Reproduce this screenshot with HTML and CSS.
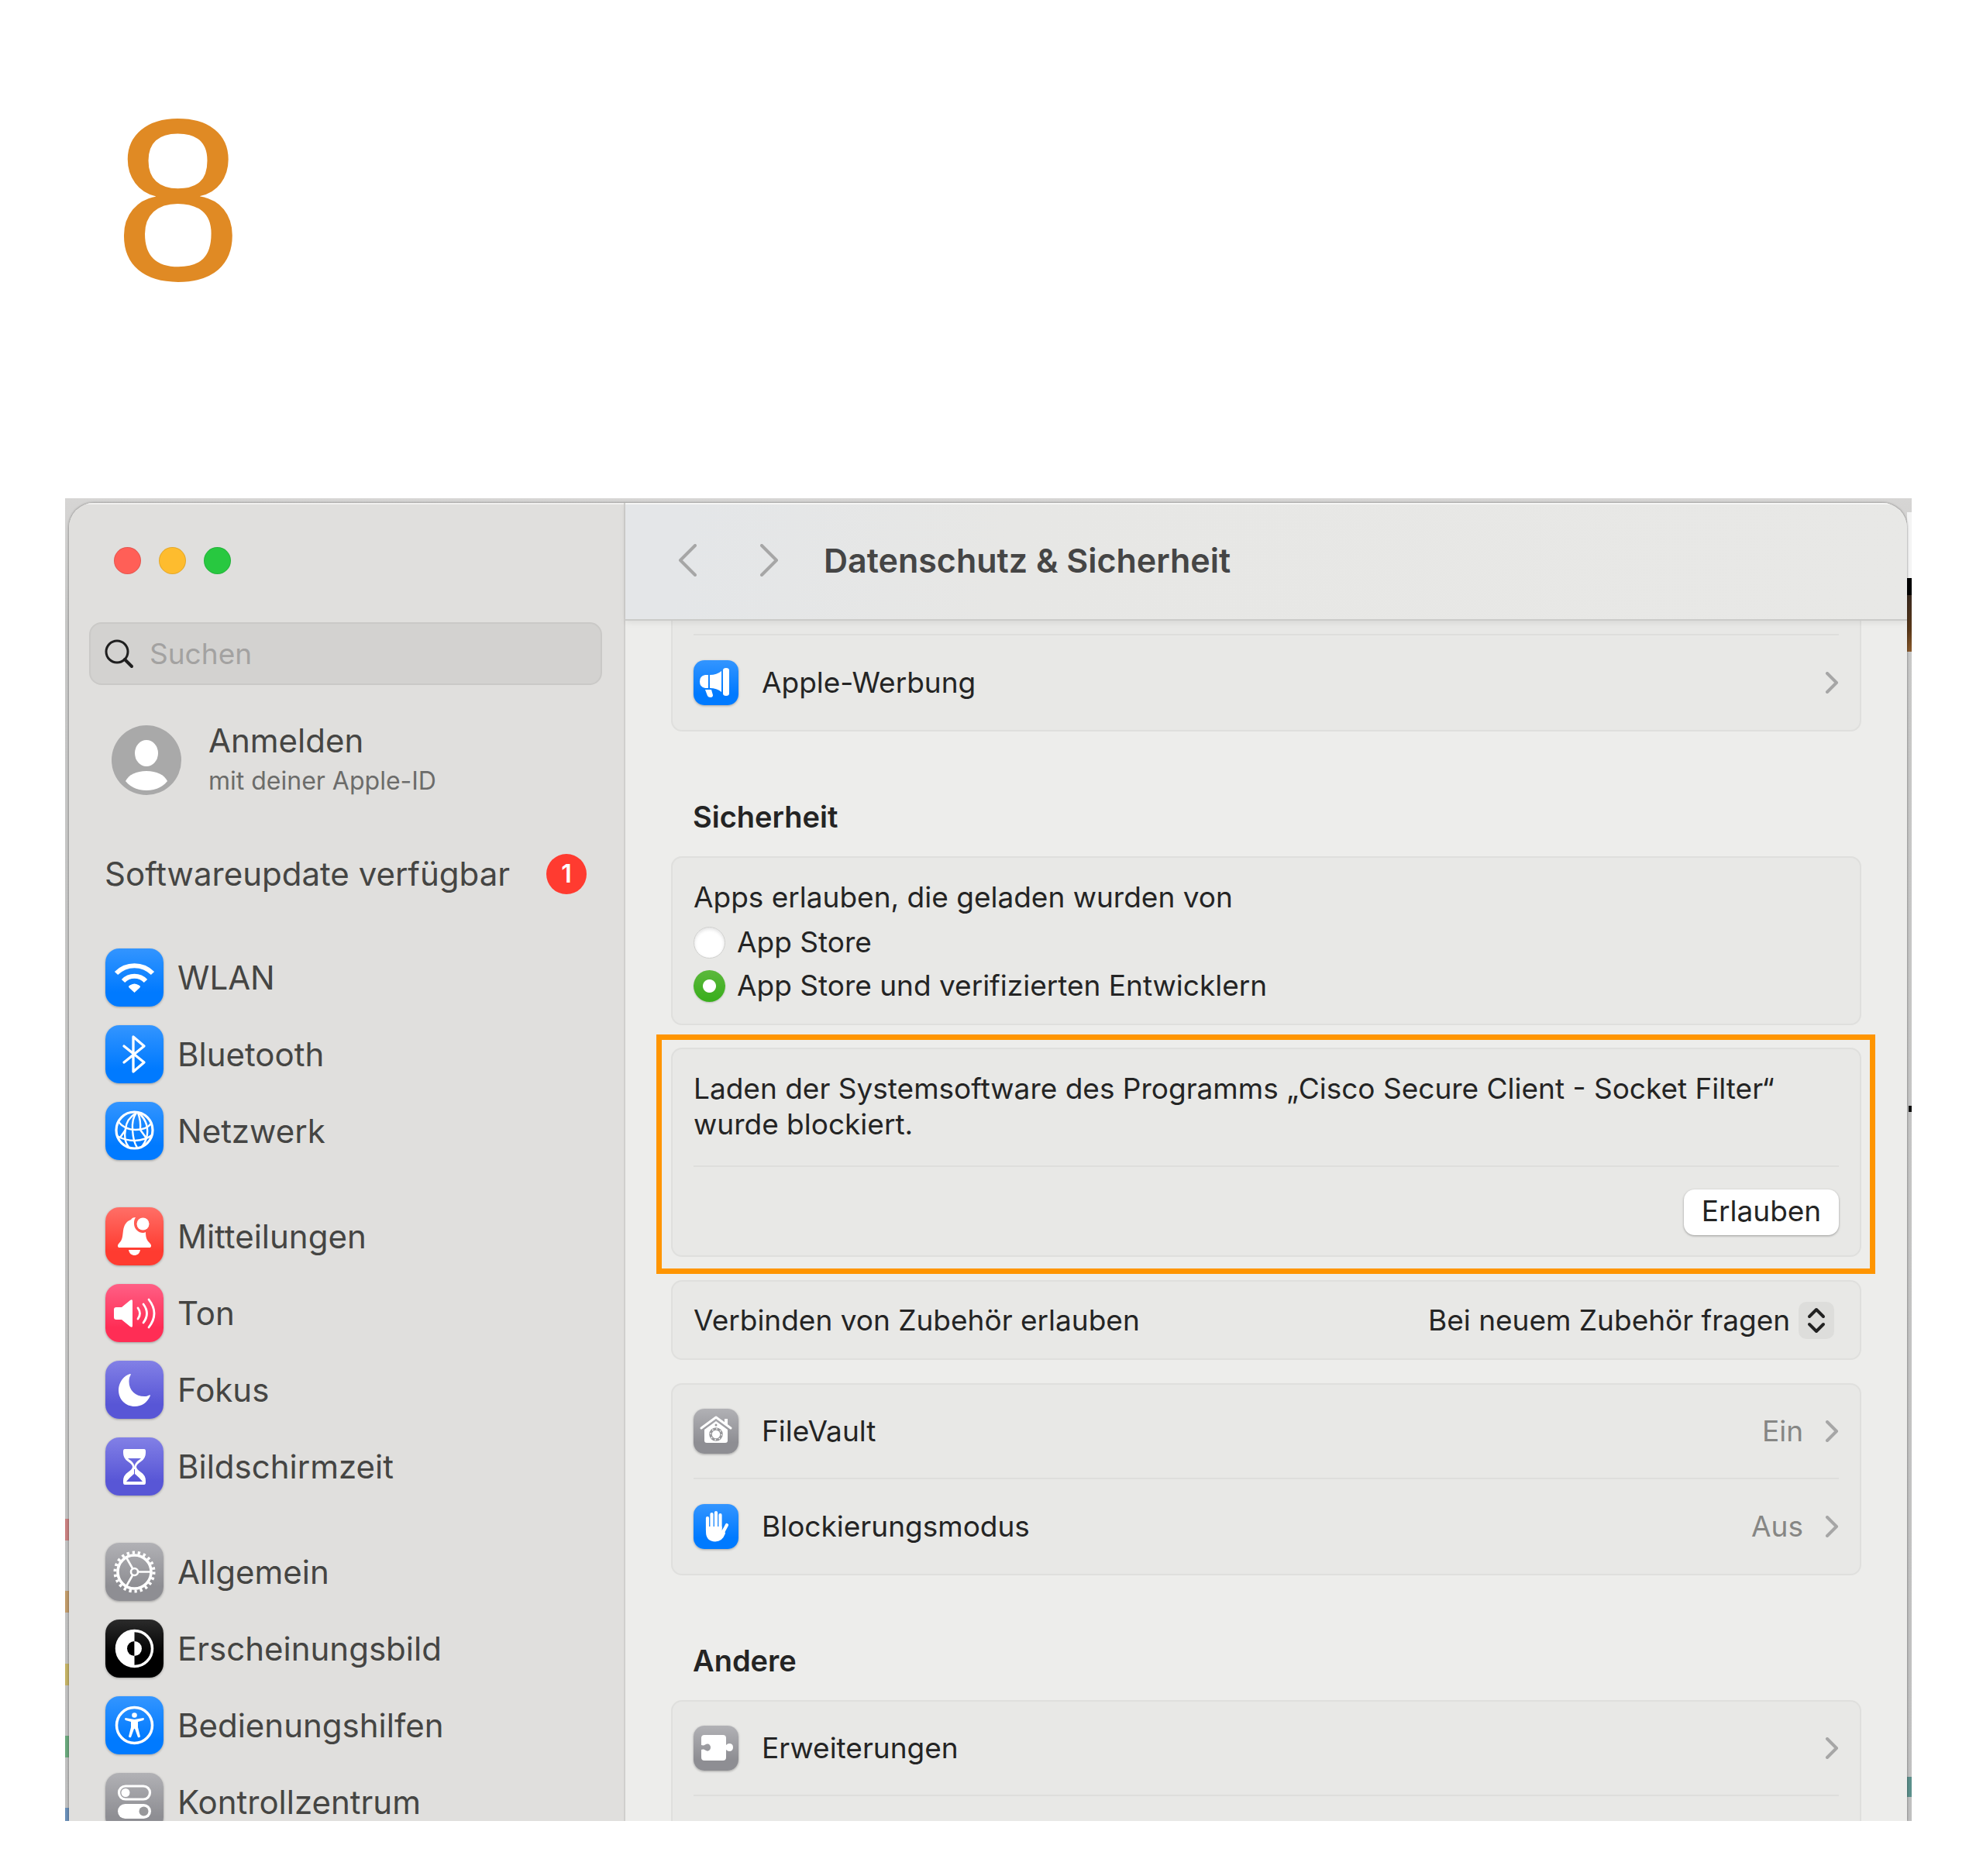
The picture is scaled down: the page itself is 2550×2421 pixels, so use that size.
FILE: index.html
```html
<!DOCTYPE html>
<html lang="de">
<head>
    <meta charset="UTF-8">
    <meta name="viewport" content="width=device-width, initial-scale=1.0">
    <title>Datenschutz &amp; Sicherheit</title>
    <link rel="stylesheet" href="styles.css">
</head>
<body>

<p class="step">8</p>

<main class="desktop">
    <div class="window">

        <aside class="sidebar">
            <div class="lights">
                <button class="light red" aria-label="Schließen"></button>
                <button class="light yellow" aria-label="Minimieren"></button>
                <button class="light green" aria-label="Vergrößern"></button>
            </div>

            <label class="search">
                <svg width="38" height="38" viewBox="0 0 38 38" fill="none" stroke="#1f1f1f" stroke-width="3" stroke-linecap="round">
                    <circle cx="16" cy="16" r="14"/>
                    <path d="M26 26 L35 35" stroke-width="4"/>
                </svg>
                <input type="search" placeholder="Suchen" aria-label="Suchen">
            </label>

            <a class="account" href="#">
                <svg width="90" height="90" viewBox="0 0 90 90">
                    <circle cx="45" cy="45" r="45" fill="#a9a9a9"/>
                    <ellipse cx="45" cy="36" rx="15" ry="17" fill="#fff"/>
                    <path d="M18 72 C22 64 32 59 45 59 C58 59 68 64 72 72 C66 80 56 84 45 84 C34 84 24 80 18 72Z" fill="#fff"/>
                </svg>
                <span class="account-text">
                    <span class="account-name">Anmelden</span>
                    <span class="account-sub">mit deiner Apple-ID</span>
                </span>
            </a>

            <a class="update" href="#">
                <span>Softwareupdate verfügbar</span>
                <span class="badge">1</span>
            </a>

            <nav>
                <ul class="group">
                    <li><a href="#">
                        <svg class="icon blue" viewBox="0 0 75 75" fill="none" stroke="#fff">
                            <path d="M14 32 A33 33 0 0 1 61 32" stroke-width="6"/>
                            <path d="M23 42 A20 20 0 0 1 52 42" stroke-width="6"/>
                            <path d="M37.5 57 L31 51 Q29 49 31 48 Q37.5 43 44 48 Q46 49 44 51Z" fill="#fff" stroke="none"/>
                        </svg>
                        WLAN</a></li>
                    <li><a href="#">
                        <svg class="icon blue" viewBox="0 0 75 75" fill="none" stroke="#fff" stroke-width="3.3" stroke-linejoin="round" stroke-linecap="round">
                            <path d="M24 27 L50 48 L36 60 V15 L50 27 L24 48"/>
                        </svg>
                        Bluetooth</a></li>
                    <li><a href="#">
                        <svg class="icon blue" viewBox="0 0 75 75" fill="none" stroke="#fff" stroke-width="2.4">
                            <circle cx="37.5" cy="36.5" r="23.5" stroke-width="3.2"/>
                            <path d="M17 26 Q25 36 39 36 Q53 36 59 28"/>
                            <path d="M15 44 Q26 50 38 50 Q52 49 60 43"/>
                            <path d="M40 14 Q27 22 26 35 Q23 50 30 58"/>
                            <path d="M40 14 Q34 22 35 36 Q36 52 41 59"/>
                            <path d="M42 14 Q46 24 45 36"/>
                            <path d="M43 14 Q58 28 53 47 Q51 53 47 58"/>
                            <path d="M26 36 L19 46 M45 36 L53 47"/>
                        </svg>
                        Netzwerk</a></li>
                </ul>

                <ul class="group">
                    <li><a href="#">
                        <svg class="icon red" viewBox="0 0 75 75" fill="#fff">
                            <path d="M39 13 C36 17 36 26 41 30 C44 33 49 34 52 32 C52 40 54 43 57 46 C59 48 60 50 58 52 H17 C15 50 16 48 18 46 C22 42 22 38 23 30 C24 23 27 18 33 16 C34 14 36 13 39 13Z"/>
                            <path d="M30 55 H45 C44 60 41 62 37.5 62 C34 62 31 60 30 55Z"/>
                            <circle cx="48.5" cy="21.5" r="8"/>
                        </svg>
                        Mitteilungen</a></li>
                    <li><a href="#">
                        <svg class="icon pink" viewBox="0 0 75 75" fill="#fff">
                            <path d="M14 30 H21 L32 21 Q35 19 35 22 V54 Q35 57 32 55 L21 46 H14 Q11 46 11 43 V33 Q11 30 14 30Z"/>
                            <g fill="none" stroke="#fff" stroke-width="2.8" stroke-linecap="round">
                                <path d="M42 31 Q47 38 42 45"/>
                                <path d="M49 26 Q58 38 49 50"/>
                                <path d="M56 20 Q70 38 56 56"/>
                            </g>
                        </svg>
                        Ton</a></li>
                    <li><a href="#">
                        <svg class="icon purple" viewBox="0 0 75 75" fill="#fff">
                            <path d="M32 17 C34 17 32 19 31 22 C28 36 38 47 52 46 C55 46 58 43 58 45 C54 54 47 59 38 59 C26 59 17 50 17 38 C17 28 24 19 32 17Z"/>
                        </svg>
                        Fokus</a></li>
                    <li><a href="#">
                        <svg class="icon purple" viewBox="0 0 75 75" fill="#fff">
                            <path fill-rule="evenodd" d="M25 15 H50 Q52 15 52 18 V20 Q52 27 46 31 Q40 35 40 38 Q40 41 46 45 Q52 49 52 56 V58 Q52 61 50 61 H25 Q23 61 23 58 V56 Q23 49 29 45 Q35 41 35 38 Q35 35 29 31 Q23 27 23 20 V18 Q23 15 25 15Z M29 27 H46 Q44 29 42 30 Q37.5 34 37.5 38 Q37.5 34 33 30 Q31 29 29 27Z M37 41 H38 V47 Q44 52 48 57 H27 Q31 52 37 47Z"/>
                        </svg>
                        Bildschirmzeit</a></li>
                </ul>

                <ul class="group">
                    <li><a href="#">
                        <svg class="icon gray" viewBox="0 0 75 75" fill="none" stroke="#fff">
                            <circle cx="37.5" cy="37.5" r="25" stroke-width="4" stroke-dasharray="3.3 3.84"/>
                            <circle cx="37.5" cy="37.5" r="21.5" stroke-width="3.6"/>
                            <circle cx="37.5" cy="37.5" r="4.5" stroke-width="2.6"/>
                            <path d="M42 37.5 H59 M35 33 L27 19 M35 42 L27 56" stroke-width="2.6"/>
                        </svg>
                        Allgemein</a></li>
                    <li><a href="#">
                        <svg class="icon black" viewBox="0 0 75 75">
                            <circle cx="37.5" cy="37.5" r="23" fill="none" stroke="#fff" stroke-width="3.5"/>
                            <path d="M37.5 14 A23.5 23.5 0 0 0 37.5 61Z" fill="#fff"/>
                            <path d="M37.5 28 A9.5 9.5 0 0 0 37.5 47Z" fill="#000"/>
                            <path d="M37.5 28 A9.5 9.5 0 0 1 37.5 47Z" fill="#fff"/>
                        </svg>
                        Erscheinungsbild</a></li>
                    <li><a href="#">
                        <svg class="icon blue" viewBox="0 0 75 75" fill="#fff">
                            <circle cx="37.5" cy="37.5" r="23" fill="none" stroke="#fff" stroke-width="3.5"/>
                            <circle cx="37.5" cy="24.5" r="3.3"/>
                            <path d="M26 28 L37.5 30 L49 28 Q51 29 49 31 L42 33 V40 L45 52 Q44 54 42 53 L38 42 H37 L33 53 Q31 54 30 52 L33 40 V33 L26 31 Q24 29 26 28Z"/>
                        </svg>
                        Bedienungshilfen</a></li>
                    <li><a href="#">
                        <svg class="icon gray" viewBox="0 0 75 75">
                            <rect x="17.5" y="17" width="40" height="17" rx="8.5" fill="none" stroke="#fff" stroke-width="3.2"/>
                            <circle cx="26" cy="25.5" r="5.5" fill="#fff"/>
                            <rect x="16" y="40" width="43" height="19" rx="9.5" fill="#fff"/>
                            <circle cx="49.5" cy="49.5" r="6" fill="#98989b"/>
                        </svg>
                        Kontrollzentrum</a></li>
                </ul>
            </nav>
        </aside>

        <section class="content">
            <header class="toolbar">
                <button class="nav-button" aria-label="Zurück">
                    <svg width="24" height="42" viewBox="0 0 24 42"><path d="M22 2 L3 21 L22 40"/></svg>
                </button>
                <button class="nav-button" aria-label="Vorwärts">
                    <svg width="24" height="42" viewBox="0 0 24 42"><path d="M2 2 L21 21 L2 40"/></svg>
                </button>
                <h1>Datenschutz &amp; Sicherheit</h1>
            </header>

            <div class="pane">
                <div class="card card-cut">
                    <a class="row" href="#">
                        <svg class="icon small blue" viewBox="0 0 58 58" fill="#fff">
                            <path d="M38 13 Q38 10 42 10 Q46 10 46 13 V43 Q46 46 42 46 Q38 46 38 43Z"/>
                            <path d="M21 19 Q30 19 36 14 V41 Q30 36 21 36Z"/>
                            <path d="M19 19 V36 H15 Q8 35 8 27.5 Q8 20 15 19Z"/>
                            <path d="M15 38 H23 L25 45 Q25 48 22 48 Q19 48 18 46Z"/>
                        </svg>
                        <span class="row-title">Apple-Werbung</span>
                        <svg class="chevron" viewBox="0 0 18 28"><path d="M3 2 L15 14 L3 26"/></svg>
                    </a>
                </div>

                <h2>Sicherheit</h2>

                <fieldset class="card sources">
                    <legend>Apps erlauben, die geladen wurden von</legend>
                    <label><input type="radio" name="quelle"> App Store</label>
                    <label><input type="radio" name="quelle" checked> App Store und verifizierten Entwicklern</label>
                </fieldset>

                <div class="highlight">
                    <div class="card">
                        <p class="notice">Laden der Systemsoftware des Programms „Cisco Secure Client - Socket Filter“ wurde blockiert.</p>
                        <div class="actions">
                            <button class="allow">Erlauben</button>
                        </div>
                    </div>
                </div>

                <div class="card accessory">
                    <label for="zubehoer">Verbinden von Zubehör erlauben</label>
                    <div class="picker">
                        <select id="zubehoer">
                            <option>Bei neuem Zubehör fragen</option>
                        </select>
                        <svg width="46" height="48" viewBox="0 0 46 48">
                            <rect width="46" height="48" rx="10" fill="#dddddb"/>
                            <path d="M14 19 L23 10 L32 19 M14 29 L23 38 L32 29" fill="none" stroke="#222" stroke-width="4" stroke-linecap="round" stroke-linejoin="round"/>
                        </svg>
                    </div>
                </div>

                <div class="card">
                    <a class="row" href="#">
                        <svg class="icon small gray" viewBox="0 0 58 58" fill="#fff">
                            <path d="M10 25 L29 11 L48 25" fill="none" stroke="#fff" stroke-width="3" stroke-linecap="round" stroke-linejoin="round"/>
                            <path d="M40 13 H44 V21 L40 18Z"/>
                            <path d="M14 27 L29 16 L44 27 V41 Q44 44 41 44 H17 Q14 44 14 41Z"/>
                            <circle cx="29" cy="33" r="7" fill="none" stroke="#98989b" stroke-width="3.6"/>
                            <circle cx="29" cy="33" r="7" fill="none" stroke="#fff" stroke-width="1.5" stroke-dasharray="1.5 4"/>
                            <circle cx="29" cy="21" r="1.5" fill="#98989b"/>
                        </svg>
                        <span class="row-title">FileVault</span>
                        <span class="row-value">Ein</span>
                        <svg class="chevron" viewBox="0 0 18 28"><path d="M3 2 L15 14 L3 26"/></svg>
                    </a>
                    <a class="row" href="#">
                        <svg class="icon small blue" viewBox="0 0 58 58" fill="none" stroke="#fff" stroke-width="4.2" stroke-linecap="round">
                            <path d="M18 18 V34 M23.5 13 V32 M29 11 V32 M34.5 14 V32 M43 27 L36 40"/>
                            <path d="M16 29 H36.6 V34 L39 31 L41 38 Q37 48.5 28 48.5 Q16 48 16 36Z" fill="#fff" stroke="none"/>
                        </svg>
                        <span class="row-title">Blockierungsmodus</span>
                        <span class="row-value">Aus</span>
                        <svg class="chevron" viewBox="0 0 18 28"><path d="M3 2 L15 14 L3 26"/></svg>
                    </a>
                </div>

                <h2>Andere</h2>

                <div class="card">
                    <a class="row" href="#">
                        <svg class="icon small gray" viewBox="0 0 58 58" fill="#fff">
                            <path d="M14 12 H38 Q42 12 42 16 V25 Q44 23 46 23 Q51 23 51 28 Q51 33 46 33 Q44 33 42 31 V41 Q42 45 38 45 H14 Q10 45 10 41 V31 Q13 30 15 31.5 Q17 33 19 32.5 Q22 31 22 28 Q22 25 19 23.5 Q17 23 15 24.5 Q13 26 10 25 V16 Q10 12 14 12Z"/>
                        </svg>
                        <span class="row-title">Erweiterungen</span>
                        <svg class="chevron" viewBox="0 0 18 28"><path d="M3 2 L15 14 L3 26"/></svg>
                    </a>
                    <div class="row"></div>
                </div>
            </div>
        </section>

    </div>
</main>

</body>
</html>
```
FILE: styles.css
```css
* {
    box-sizing: border-box;
}

body {
    display: flex;
    flex-direction: column;
    height: 100vh;
    margin: 0;
    padding: 0 83px 71px 84px;
    background-color: white;
    color: #242424;
    font-family: Inter, "Liberation Sans", sans-serif;
    font-size: 37px;
    line-height: 46px;
}

a {
    color: inherit;
    text-decoration: none;
}

button, input, select {
    font: inherit;
    color: inherit;
}

h1, h2, p, ul {
    margin: 0;
    padding: 0;
}

.step {
    flex: none;
    height: 643px;
    padding: 91px 0 0 63px;
    color: #e08a24;
    font-family: "Liberation Sans", Arial, sans-serif;
    font-size: 298px;
    line-height: 334px;
}

/* window on the desktop, cut off at the bottom */

.desktop {
    flex: 1;
    min-height: 0;
    overflow: hidden;
    padding: 6px 6px 0 5px;
    /* bits of the pages behind the window that show at its sides */
    background:
        linear-gradient(#c98080, #c98080) 0 1317px / 5px 28px no-repeat,
        linear-gradient(#c09a6a, #c09a6a) 0 1410px / 5px 28px no-repeat,
        linear-gradient(#c4b264, #c4b264) 0 1504px / 5px 28px no-repeat,
        linear-gradient(#6aa87c, #6aa87c) 0 1597px / 5px 28px no-repeat,
        linear-gradient(#6a8fb8, #6a8fb8) 0 1690px / 5px 28px no-repeat,
        linear-gradient(#f4f4f4, #f4f4f4) 100% 18px / 6px 85px no-repeat,
        linear-gradient(#000, #000) 100% 103px / 6px 22px no-repeat,
        linear-gradient(#3a2a20, #5a3818 45px, #8a5a2c) 100% 125px / 6px 73px no-repeat,
        linear-gradient(#111, #111) 100% 784px / 4px 8px no-repeat,
        linear-gradient(#5b8f8b, #5b8f8b) 100% 1650px / 6px 26px no-repeat,
        linear-gradient(#d6d5d4, #c8c8c7 160px, #c0c0c0);
}

.window {
    display: flex;
    height: 100%;
    overflow: hidden;
    background-color: #ededeb;
    border-radius: 32px 32px 0 0;
    box-shadow: 0 0 3px rgba(0, 0, 0, 0.5);
}

/* sidebar */

.sidebar {
    flex: none;
    width: 718px;
    padding: 57px 28px 0 26px;
    background-color: #e0dfdd;
    border-right: 2px solid #d0cfcd;
    box-shadow: inset 0 2px #f1f0ef;
    color: #454543;
    font-size: 42px;
    line-height: 52px;
}

.lights {
    display: flex;
    gap: 23px;
    padding-left: 32px;
}

.light {
    width: 35px;
    height: 35px;
    padding: 0;
    border: 1px solid rgba(0, 0, 0, 0.1);
    border-radius: 50%;
}

.light.red {
    background-color: #ff5f57;
}

.light.yellow {
    background-color: #febc2e;
}

.light.green {
    background-color: #28c840;
}

.search {
    display: flex;
    align-items: center;
    gap: 20px;
    height: 81px;
    margin-top: 62px;
    padding: 0 18px;
    background-color: #d3d2d0;
    border: 2px solid #cac9c7;
    border-radius: 16px;
}

.search input {
    flex: 1;
    min-width: 0;
    padding: 0;
    background: none;
    border: none;
    font-size: 37px;
}

.search input::placeholder {
    color: #a3a2a1;
    opacity: 1;
}

.account {
    display: flex;
    align-items: center;
    gap: 35px;
    margin-top: 46px;
    padding-left: 29px;
}

.account-text {
    display: flex;
    flex-direction: column;
    gap: 3px;
}

.account-sub {
    color: #6c6c6a;
    font-size: 32px;
    line-height: 46px;
}

.update {
    display: flex;
    align-items: center;
    justify-content: space-between;
    margin-top: 71px;
    padding: 0 20px;
}

.badge {
    width: 52px;
    height: 52px;
    background-color: #ff3b30;
    border-radius: 50%;
    color: white;
    font-size: 32px;
    font-weight: 600;
    text-align: center;
}

nav {
    margin-top: 70px;
}

.group {
    display: flex;
    flex-direction: column;
    gap: 24px;
    margin-bottom: 61px;
    padding: 0 21px;
    list-style: none;
}

.group a {
    display: flex;
    align-items: center;
    gap: 18px;
}

.icon {
    flex: none;
    width: 75px;
    height: 75px;
    border-radius: 18px;
    box-shadow: 0 1px 3px rgba(0, 0, 0, 0.3);
}

.icon.small {
    width: 58px;
    height: 58px;
    border-radius: 14px;
}

.icon.blue {
    background: linear-gradient(#3395ff, #007aff 75%);
}

.icon.red {
    background: linear-gradient(#ff6f67, #ff3b30 75%);
}

.icon.pink {
    background: linear-gradient(#ff5f85, #ff2d55 75%);
}

.icon.purple {
    background: linear-gradient(#8280e6, #5856d6 75%);
}

.icon.gray {
    background: linear-gradient(#b1b1b5, #8e8e93 75%);
}

.icon.black {
    background: linear-gradient(#2b2b2b, #000 60%);
}

/* right side */

.content {
    flex: 1;
    min-width: 0;
}

.toolbar {
    position: relative;
    display: flex;
    align-items: center;
    height: 152px;
    padding: 0 0 2px 62px;
    background: linear-gradient(100deg, #e4e6e8 5%, #e7e7e5 30%, #e8e8e6);
    border-bottom: 2px solid #cbcbc9;
    box-shadow: inset 0 2px #f6f6f5, 0 2px 8px rgba(0, 0, 0, 0.08);
}

.toolbar h1 {
    color: #454545;
    font-size: 43px;
    font-weight: 600;
    line-height: 52px;
}

.nav-button {
    display: flex;
    width: 36px;
    margin-right: 70px;
    padding: 0 6px;
    background: none;
    border: none;
}

.nav-button + h1 {
    margin-left: -18px;
}

.nav-button path, .chevron path {
    fill: none;
    stroke: #a6a6a6;
    stroke-width: 4px;
    stroke-linecap: round;
    stroke-linejoin: round;
}

.chevron {
    width: 18px;
    height: 28px;
    margin-left: 28px;
}

.pane {
    padding: 0 59px;
}

.card {
    padding: 0 27px;
    background-color: #e8e8e6;
    border: 2px solid #dfdfdd;
    border-radius: 14px;
}

.card-cut {
    padding-top: 17px;
    border-top: none;
    border-radius: 0 0 14px 14px;
}

.row {
    display: flex;
    align-items: center;
    height: 120px;
}

.row + .row, .card-cut .row {
    height: 124px;
    border-top: 2px solid #dededc;
}

.row-title {
    flex: 1;
    margin-left: 30px;
}

.row-value {
    color: #868684;
}

h2 {
    padding: 85px 28px 26px;
    font-size: 38px;
    font-weight: 600;
    line-height: 50px;
}

.sources {
    display: flex;
    flex-direction: column;
    margin: 0;
    padding: 28px 27px 21px;
}

.sources legend {
    float: left;
    margin-bottom: 7px;
    padding: 0;
}

.sources label {
    display: flex;
    align-items: center;
    gap: 15px;
    height: 56px;
}

input[type="radio"] {
    appearance: none;
    width: 41px;
    height: 41px;
    margin: 0;
    background-color: white;
    border: 1px solid #cfcfcd;
    border-radius: 50%;
    box-shadow: inset 0 2px 4px rgba(0, 0, 0, 0.12);
}

input[type="radio"]:checked {
    background: radial-gradient(circle, white 8px, transparent 9px), linear-gradient(#5cb83c, #38ae1b);
    border: none;
    box-shadow: 0 1px 2px rgba(0, 0, 0, 0.2);
}

.highlight {
    margin: 12px -18px 8px -19px;
    padding: 10px 11px 15px 12px;
    border: 7px solid #ff9500;
}

.notice {
    padding: 28px 0 30px;
    border-bottom: 2px solid #dededc;
}

.actions {
    display: flex;
    justify-content: flex-end;
    padding: 29px 0 26px;
}

.allow {
    width: 200px;
    height: 59px;
    padding: 0 0 3px;
    background-color: white;
    border: none;
    border-radius: 14px;
    box-shadow: 0 1px 3px rgba(0, 0, 0, 0.35);
}

.accessory {
    display: flex;
    align-items: center;
    justify-content: space-between;
    height: 103px;
    margin-bottom: 30px;
}

.picker {
    display: flex;
    align-items: center;
    gap: 10px;
    padding-right: 6px;
}

.picker select {
    appearance: none;
    padding: 0;
    background: none;
    border: none;
}
```
